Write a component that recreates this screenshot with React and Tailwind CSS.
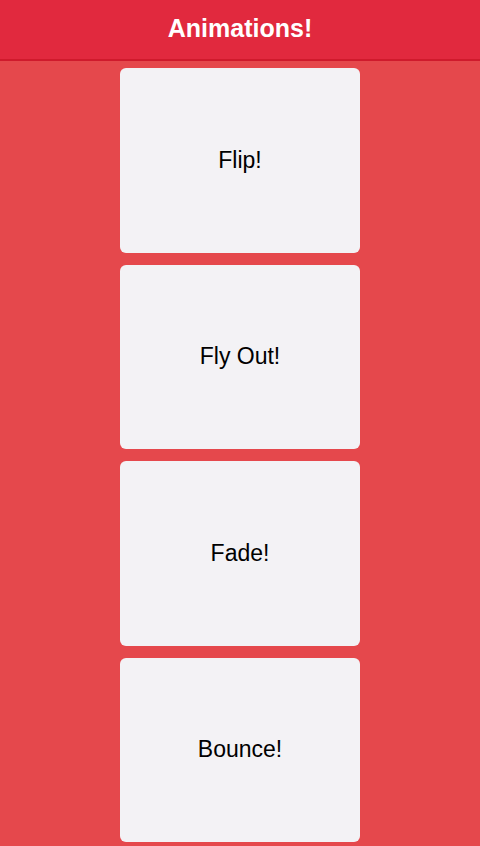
export default function App() {
  const items = ["Flip!", "Fly Out!", "Fade!", "Bounce!"];
  return (
    <div className="w-[480px] h-[846px] overflow-hidden bg-[#e5484c] flex flex-col" style={{ fontFamily: '"Liberation Sans", Arial, sans-serif' }}>
      <div className="h-[61px] shrink-0 bg-[#e1293e] border-b-2 border-[#cf1a2c] flex items-center justify-center">
        <span className="text-white font-bold text-[25px] leading-none pb-[2px]">Animations!</span>
      </div>
      <div className="flex flex-col items-center gap-[12px] pt-[7px]">
        {items.map((t) => (
          <div key={t} className="w-[240px] h-[184.5px] shrink-0 bg-[#f3f2f5] rounded-[6px] flex items-center justify-center">
            <span className="text-black text-[23px] leading-none">{t}</span>
          </div>
        ))}
      </div>
    </div>
  );
}
